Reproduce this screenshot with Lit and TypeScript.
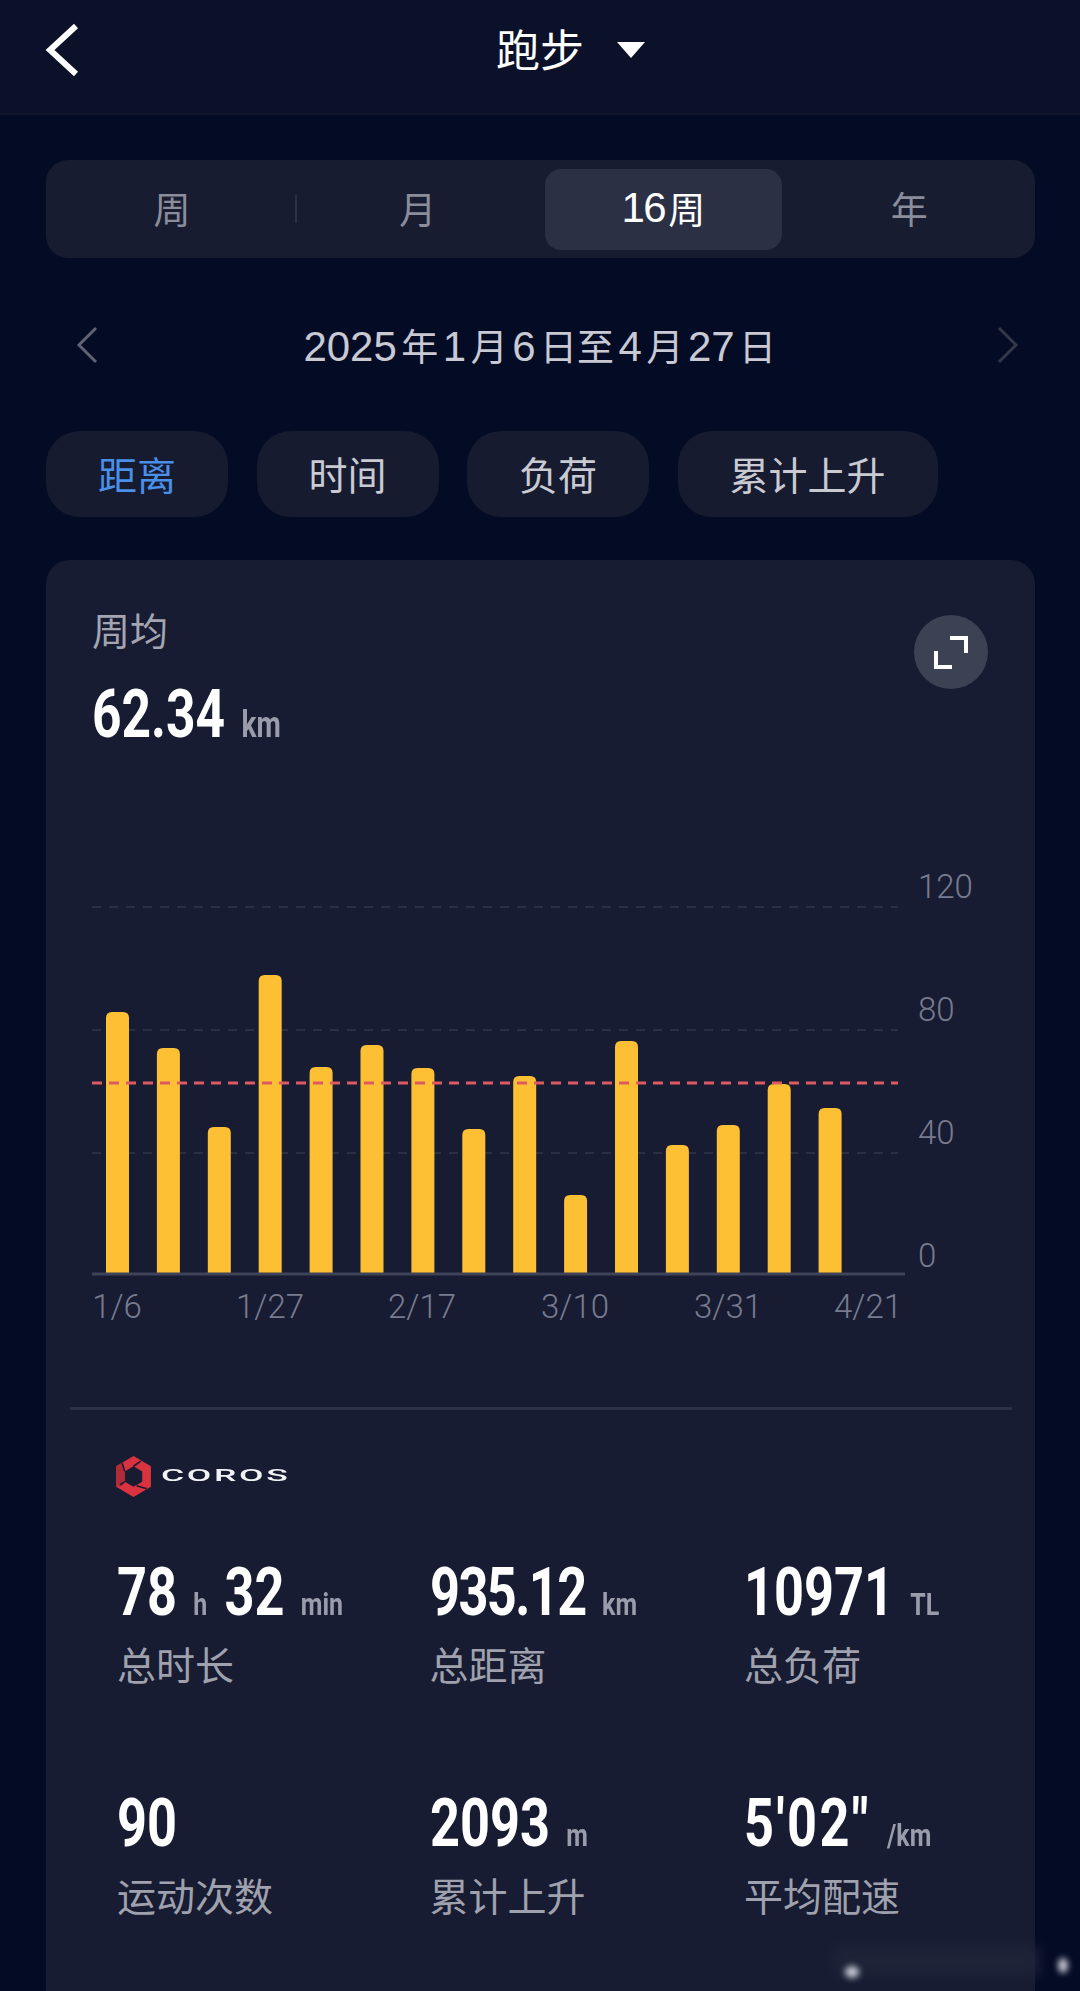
import { LitElement, html, css, svg } from 'lit'
import { customElement } from 'lit/decorators.js'

const BAR_TOPS = [1012, 1048, 1127, 975, 1067, 1045, 1068, 1129, 1076, 1195, 1041, 1145, 1125, 1084, 1108]
const BASE_Y = 1274
const GRID_YS = [907, 1030, 1153]
const Y_LABELS = [
  { t: '120', y: 898 },
  { t: '80', y: 1021 },
  { t: '40', y: 1144 },
  { t: '0', y: 1267 },
]
const X_LABELS = [
  { t: '1/6', x: 117 },
  { t: '1/27', x: 270 },
  { t: '2/17', x: 422 },
  { t: '3/10', x: 575 },
  { t: '3/31', x: 728 },
  { t: '4/21', x: 868 },
]

// ls: per-value letter spacing, the reference numerals are not evenly wide
type Part = { v: string; u: string; ls?: number }
const STATS: { parts: Part[]; label: string }[] = [
  { parts: [{ v: '78', u: 'h' }, { v: '32', u: 'min' }], label: '总时长' },
  { parts: [{ v: '935.12', u: 'km', ls: -2 }], label: '总距离' },
  { parts: [{ v: '10971', u: 'TL' }], label: '总负荷' },
  { parts: [{ v: '90', u: '' }], label: '运动次数' },
  { parts: [{ v: '2093', u: 'm' }], label: '累计上升' },
  { parts: [{ v: `5'02"`, u: '/km', ls: 3 }], label: '平均配速' },
]

@customElement('app-root')
export class AppRoot extends LitElement {
  static styles = css`
    :host {
      display: flex;
      flex-direction: column;
      width: 1080px;
      height: 1991px;
      overflow: hidden;
      position: relative;
      background: #040b25;
      font-family: 'Liberation Sans', 'Noto Sans CJK SC', sans-serif;
    }
    .header {
      height: 113px;
      flex: none;
      display: flex;
      align-items: center;
      justify-content: center;
      gap: 33px;
      padding-left: 50px;
      position: relative;
      background: #0b1129;
      border-bottom: 2px solid #0e142c;
      box-sizing: content-box;
      color: #fff;
    }
    .back {
      position: absolute;
      left: 44px;
      top: 22px;
    }
    .title {
      font: 400 44px/60px 'Liberation Sans', 'Noto Sans CJK SC', sans-serif;
      margin-top: -10px;
      margin-left: 11px;
    }
    .caret {
      margin-top: -14px;
      width: 0;
      height: 0;
      border-left: 14px solid transparent;
      border-right: 14px solid transparent;
      border-top: 16px solid #fff;
    }
    .main {
      flex: 1;
      display: flex;
      flex-direction: column;
      padding: 45px 45px 0 46px;
      min-height: 0;
    }
    .segment {
      flex: none;
      height: 98px;
      display: grid;
      grid-template-columns: repeat(4, 1fr);
      padding: 0 3px;
      background: #171c30;
      border-radius: 22px;
      position: relative;
    }
    .seg {
      display: flex;
      align-items: center;
      justify-content: center;
      margin: 9px 4px 8px;
      padding-bottom: 3px;
      border-radius: 16px;
      font-size: 37px;
      color: #8b8d9b;
    }
    .seg.on {
      background: #2c3044;
      color: #fff;
    }
    .seg .d {
      font-size: 42px;
      letter-spacing: -1.5px;
      margin-right: 3px;
    }
    .seg-sep {
      position: absolute;
      left: 249px;
      top: 35px;
      width: 2px;
      height: 28px;
      background: #2c3044;
    }
    .date-row {
      flex: none;
      height: 76px;
      margin-top: 49px;
      display: flex;
      align-items: center;
      justify-content: space-between;
      padding: 0 16px 0 30px;
    }
    .date {
      font-size: 37px;
      color: #c8c9d3;
      margin-left: -20px;
    }
    .date .d {
      font-size: 42px;
      margin: 0 4.5px;
    }
    .chips {
      flex: none;
      margin-top: 48px;
      display: flex;
      gap: 28.5px;
    }
    .chip {
      height: 86px;
      padding: 0 52px 3px;
      box-sizing: border-box;
      display: flex;
      align-items: center;
      border-radius: 34px;
      background: #161b30;
      font-size: 39px;
      color: #c9cad2;
    }
    .chip.on {
      color: #4a8fe8;
    }
    .card {
      flex: 1;
      min-height: 0;
      margin-top: 43px;
      background: #171c32;
      border-radius: 24px 24px 0 0;
      display: flex;
      flex-direction: column;
    }
    .head {
      height: 300px;
      flex: none;
      position: relative;
      padding: 46px 0 0 46px;
      box-sizing: border-box;
    }
    .avg-label {
      font-size: 38px;
      line-height: 52px;
      color: #a4a5b2;
    }
    .avg-row {
      margin-top: 19px;
      white-space: nowrap;
      transform: scaleX(0.78);
      transform-origin: left center;
    }
    .num {
      font-family: Roboto, 'Liberation Sans', sans-serif;
      font-weight: 700;
      color: #fff;
    }
    .avg-row .num {
      font-size: 66px;
      line-height: 76px;
    }
    .unit {
      font-family: Roboto, 'Liberation Sans', sans-serif;
      font-weight: 700;
      color: #9a9cab;
      font-size: 36px;
      margin-left: 21px;
    }
    .expand {
      position: absolute;
      left: 868px;
      top: 55px;
      width: 74px;
      height: 74px;
      border-radius: 50%;
      background: #3d4154;
      display: flex;
      align-items: center;
      justify-content: center;
    }
    .chart {
      display: block;
      flex: none;
    }
    .grid {
      stroke: #2a2f44;
      stroke-width: 2;
      stroke-dasharray: 9 8;
    }
    .avg {
      stroke: #dd5a62;
      stroke-width: 3;
      stroke-dasharray: 10 7;
    }
    .axis {
      stroke: #3f4358;
      stroke-width: 3;
    }
    .bar {
      fill: #fdc035;
    }
    .tick {
      font: 300 33px Roboto, 'Liberation Sans', sans-serif;
      fill: #777b8f;
    }
    .divider {
      height: 3px;
      margin: 0 23px 0 24px;
      background: #2c3145;
      flex: none;
    }
    .brand {
      flex: none;
      margin: 46px 0 0 67px;
      height: 40px;
      display: flex;
      align-items: center;
      gap: 7px;
    }
    .brand-name {
      display: inline-block;
      font: 500 16px/16px Roboto, 'Liberation Sans', sans-serif;
      letter-spacing: 1.2px;
      color: #f2f3f6;
      transform: scaleX(2.22);
      transform-origin: left center;
    }
    .stats {
      margin-top: 56px;
      padding-left: 71px;
      display: grid;
      grid-template-columns: 312.5px 314.5px 300px;
      grid-auto-rows: 231px;
    }
    .stat-value {
      height: 80px;
      display: flex;
      align-items: baseline;
      white-space: nowrap;
      transform: scaleX(0.78);
      transform-origin: left center;
    }
    .stat-value .num {
      font-size: 67px;
      line-height: 80px;
    }
    .stat-value .unit {
      font-size: 32px;
      margin: 0 22px 0 21px;
    }
    .stat-label {
      margin-top: 9px;
      font-size: 39px;
      line-height: 52px;
      color: #a0a1ae;
    }
    .smudge {
      position: absolute;
      filter: blur(3px);
      pointer-events: none;
    }
    .smudge.band {
      left: 835px;
      top: 1946px;
      width: 205px;
      height: 30px;
      background: #20253a;
      filter: blur(6px);
      opacity: 0.8;
    }
    .smudge.left {
      left: 845px;
      top: 1966px;
      width: 14px;
      height: 12px;
      border-radius: 50%;
      background: #c9cbd6;
    }
    .smudge.right {
      left: 1058px;
      top: 1958px;
      width: 10px;
      height: 15px;
      border-radius: 50%;
      background: #c9cbd6;
    }
  `

  private renderChart() {
    return html`<svg class="chart" width="989" height="547" viewBox="46 860 989 547">
      ${GRID_YS.map((y) => svg`<line class="grid" x1="92" x2="898" y1=${y} y2=${y}></line>`)}
      ${BAR_TOPS.map(
        (top, i) => svg`<path class="bar" d="M${106 + i * 50.9} ${BASE_Y} V${top + 6} q0 -6 6 -6 h11 q6 0 6 6 V${BASE_Y} Z"></path>`
      )}
      <line class="avg" x1="92" x2="898" y1="1083" y2="1083"></line>
      <line class="axis" x1="92" x2="905" y1=${BASE_Y} y2=${BASE_Y}></line>
      ${Y_LABELS.map((l) => svg`<text class="tick" x="918" y=${l.y}>${l.t}</text>`)}
      ${X_LABELS.map((l) => svg`<text class="tick" x=${l.x} y="1318" text-anchor="middle">${l.t}</text>`)}
    </svg>`
  }

  private renderLogo() {
    return html`<svg width="41" height="41" viewBox="0 0 40 40">
      <path fill-rule="evenodd" d="M20 0 L37 10 V30 L20 40 L3 30 V10 Z M20 10 L11.5 15 V25 L20 30 L28.5 25 V15 Z" fill="#d8333f"></path>
      <path d="M3 10 L9 7 L11.5 15 V25 L9 29 L3 30 Z" fill="#b02b37"></path>
      <path d="M9 7 L11.5 15 M11.5 25 L7 28 M33 32 L23 29 M20 10 L27 5" fill="none" stroke="#171c32" stroke-width="1.6"></path>
    </svg>`
  }

  render() {
    return html`
      <div class="header">
        <svg class="back" width="36" height="56" viewBox="0 0 36 56">
          <path d="M32 4 L6 28 L32 52" fill="none" stroke="#fff" stroke-width="6"></path>
        </svg>
        <span class="title">跑步</span>
        <span class="caret"></span>
      </div>
      <div class="main">
        <div class="segment">
          <div class="seg">周</div>
          <div class="seg">月</div>
          <div class="seg on"><span class="d">16</span>周</div>
          <div class="seg">年</div>
          <span class="seg-sep"></span>
        </div>
        <div class="date-row">
          <svg width="22" height="38" viewBox="0 0 22 38">
            <path d="M20 2 L3 19 L20 36" fill="none" stroke="#5f6274" stroke-width="3"></path>
          </svg>
          <span class="date"><span class="d">2025</span>年<span class="d">1</span>月<span class="d">6</span>日至<span class="d">4</span>月<span class="d">27</span>日</span>
          <svg width="22" height="38" viewBox="0 0 22 38">
            <path d="M2 2 L19 19 L2 36" fill="none" stroke="#33384a" stroke-width="3"></path>
          </svg>
        </div>
        <div class="chips">
          <div class="chip on">距离</div>
          <div class="chip">时间</div>
          <div class="chip">负荷</div>
          <div class="chip">累计上升</div>
        </div>
        <div class="card">
          <div class="head">
            <div class="avg-label">周均</div>
            <div class="avg-row"><span class="num">62.34</span><span class="unit">km</span></div>
            <div class="expand">
              <svg width="36" height="36" viewBox="0 0 36 36">
                <path d="M17 4 H33 V19 M3 17 V33 H19" fill="none" stroke="#fff" stroke-width="4"></path>
              </svg>
            </div>
          </div>
          ${this.renderChart()}
          <div class="divider"></div>
          <div class="brand">
            ${this.renderLogo()}
            <span class="brand-name">COROS</span>
          </div>
          <div class="stats">
            ${STATS.map(
              (s) => html`<div>
                <div class="stat-value">
                  ${s.parts.map(
                    (p) => html`<span class="num" style=${p.ls ? `letter-spacing:${p.ls}px` : ''}>${p.v}</span>${p.u
                        ? html`<span class="unit">${p.u}</span>`
                        : ''}`
                  )}
                </div>
                <div class="stat-label">${s.label}</div>
              </div>`
            )}
          </div>
        </div>
      </div>
      <span class="smudge band"></span>
      <span class="smudge left"></span>
      <span class="smudge right"></span>
    `
  }
}

declare global {
  interface HTMLElementTagNameMap {
    'app-root': AppRoot
  }
}
